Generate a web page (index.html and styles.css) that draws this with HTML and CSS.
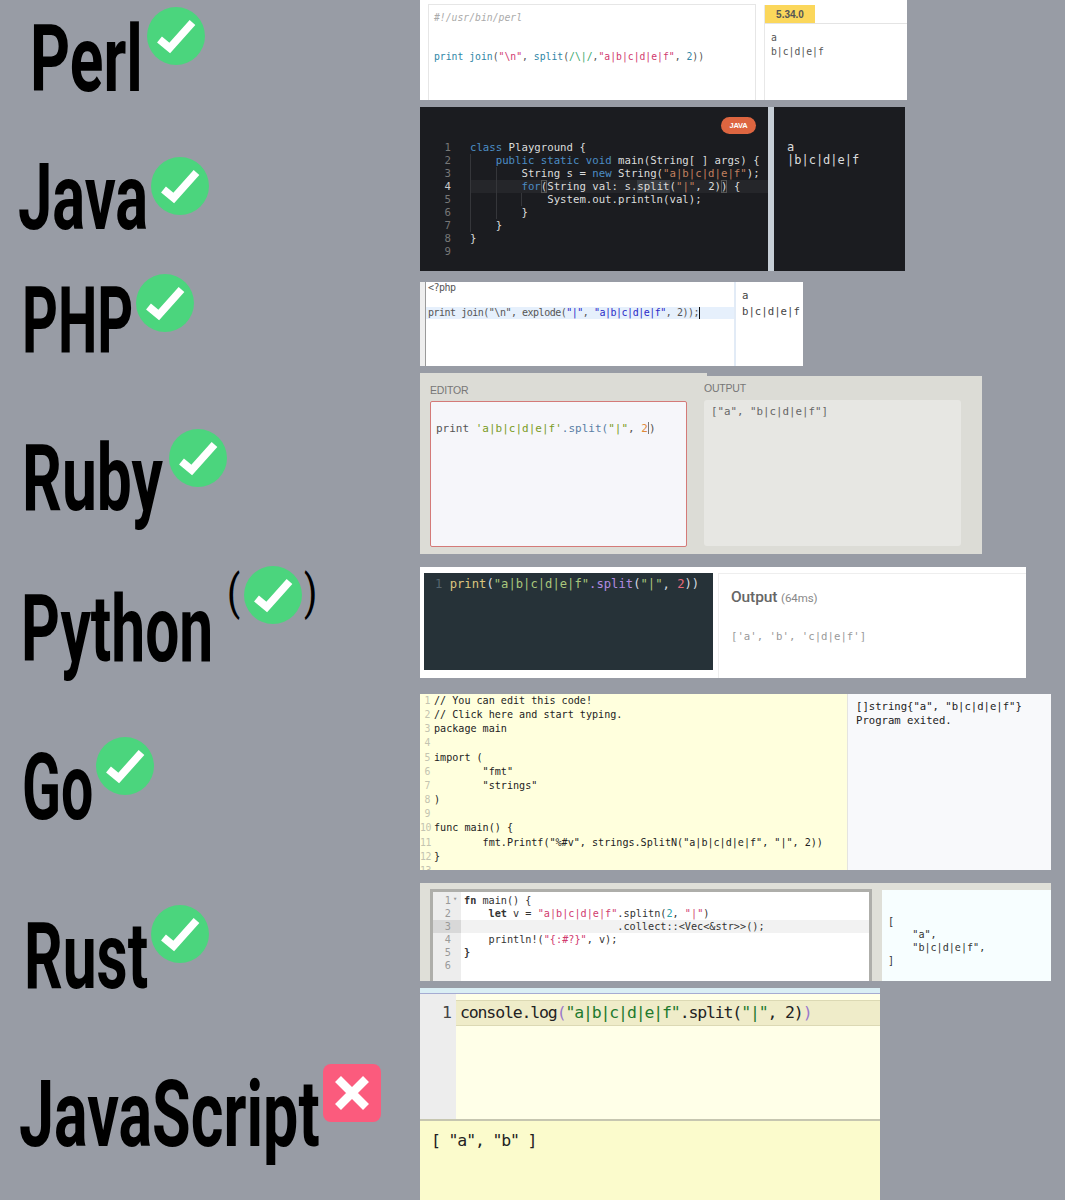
FILE: index.html
```html
<!DOCTYPE html>
<html lang="en">
<head>
<meta charset="utf-8">
<title>Split with limit by language</title>
<link rel="stylesheet" href="styles.css">
</head>
<body>
<main class="canvas">

  <h2 class="lang l-perl">Perl</h2>
  <h2 class="lang l-java">Java</h2>
  <h2 class="lang l-php">PHP</h2>
  <h2 class="lang l-ruby">Ruby</h2>
  <h2 class="lang l-python">Python</h2>
  <h2 class="lang l-go">Go</h2>
  <h2 class="lang l-rust">Rust</h2>
  <h2 class="lang l-js">JavaScript</h2>

  <svg class="badge b-perl" viewBox="0 0 58 58"><circle cx="29" cy="29" r="29" fill="#4bd57d"/><path d="M12.5 32.5 22.7 41 45.5 15.5" fill="none" stroke="#fff" stroke-width="7.6"/></svg>
  <svg class="badge b-java" viewBox="0 0 58 58"><circle cx="29" cy="29" r="29" fill="#4bd57d"/><path d="M12.5 32.5 22.7 41 45.5 15.5" fill="none" stroke="#fff" stroke-width="7.6"/></svg>
  <svg class="badge b-php" viewBox="0 0 58 58"><circle cx="29" cy="29" r="29" fill="#4bd57d"/><path d="M12.5 32.5 22.7 41 45.5 15.5" fill="none" stroke="#fff" stroke-width="7.6"/></svg>
  <svg class="badge b-ruby" viewBox="0 0 58 58"><circle cx="29" cy="29" r="29" fill="#4bd57d"/><path d="M12.5 32.5 22.7 41 45.5 15.5" fill="none" stroke="#fff" stroke-width="7.6"/></svg>
  <svg class="badge b-python" viewBox="0 0 58 58"><circle cx="29" cy="29" r="29" fill="#4bd57d"/><path d="M12.5 32.5 22.7 41 45.5 15.5" fill="none" stroke="#fff" stroke-width="7.6"/></svg>
  <svg class="badge b-go" viewBox="0 0 58 58"><circle cx="29" cy="29" r="29" fill="#4bd57d"/><path d="M12.5 32.5 22.7 41 45.5 15.5" fill="none" stroke="#fff" stroke-width="7.6"/></svg>
  <svg class="badge b-rust" viewBox="0 0 58 58"><circle cx="29" cy="29" r="29" fill="#4bd57d"/><path d="M12.5 32.5 22.7 41 45.5 15.5" fill="none" stroke="#fff" stroke-width="7.6"/></svg>
  <svg class="badge b-js" viewBox="0 0 58 58"><rect width="58" height="58" rx="8" fill="#fb5b7d"/><path d="M15 15 43 43M43 15 15 43" fill="none" stroke="#fff" stroke-width="8.4"/></svg>
  <span class="paren p-open">(</span>
  <span class="paren p-close">)</span>

  <section class="panel perl">
    <div class="perl-editor">
      <pre class="code"><span class="c-comment">#!/usr/bin/perl</span>


<span class="c-teal">print join</span>(<span class="c-pink">"\n"</span>, <span class="c-teal">split</span>(<span class="c-green">/\|/</span>,<span class="c-pink">"a|b|c|d|e|f"</span>, <span class="c-teal">2</span>))</pre>
    </div>
    <div class="perl-output">
      <div class="perl-tabs"><span class="perl-tab">5.34.0</span></div>
      <pre class="code perl-result">a
b|c|d|e|f</pre>
    </div>
  </section>

  <section class="panel java">
    <div class="java-editor">
      <span class="java-pill">JAVA</span>
      <div class="java-body">
        <pre class="code java-gutter">1
2
3
<b>4</b>
5
6
7
8
9</pre>
        <pre class="code java-code"><span class="j-kw">class</span> Playground {
    <span class="j-kw">public static void</span> main(String[ ] args) {
        String s = <span class="j-kw">new</span> String(<span class="j-str">"a|b|c|d|e|f"</span>);
        <span class="j-kw">for</span><span class="j-box">(</span>String val: s.<span class="j-hl">split</span>(<span class="j-str">"|"</span>, 2)<span class="j-box">)</span> {
            System.out.println(val);
        }
    }
}</pre>
      </div>
      <span class="java-active"></span>
      <span class="guide g1"></span>
      <span class="guide g2"></span>
      <span class="guide g3"></span>
    </div>
    <pre class="code java-output">a
|b|c|d|e|f</pre>
  </section>

  <section class="panel php">
    <div class="php-gutter"></div>
    <pre class="code php-code">&lt;?php

<span class="php-line">print join("\n", explode(<span class="p-str">"|"</span>, <span class="p-str">"a|b|c|d|e|f"</span>, 2));<span class="php-caret"></span></span></pre>
    <pre class="code php-output">a
b|c|d|e|f</pre>
  </section>

  <section class="panel ruby">
    <div class="ruby-col ruby-left">
      <h3 class="ruby-title">EDITOR</h3>
      <pre class="code ruby-editor">print <span class="r-str">'a|b|c|d|e|f'</span><span class="r-meth">.split(</span><span class="r-str">"|"</span>, <span class="r-num">2</span><span class="r-caret"></span>)</pre>
    </div>
    <div class="ruby-col ruby-right">
      <h3 class="ruby-title">OUTPUT</h3>
      <pre class="code ruby-output">["a", "b|c|d|e|f"]</pre>
    </div>
  </section>

  <section class="panel python">
    <pre class="code python-editor"><span class="py-num">1</span> <span class="py-fn">print</span>(<span class="py-str">"a|b|c|d|e|f"</span><span class="py-meth">.split</span>(<span class="py-str">"|"</span>, <span class="py-two">2</span>))</pre>
    <div class="python-output">
      <p class="python-title">Output <small>(64ms)</small></p>
      <pre class="code python-result">['a', 'b', 'c|d|e|f']</pre>
    </div>
  </section>

  <section class="panel go">
    <div class="go-editor">
      <pre class="code go-gutter">1
2
3
4
5
6
7
8
9
10
11
12
13</pre>
      <pre class="code go-code">// You can edit this code!
// Click here and start typing.
package main

import (
        "fmt"
        "strings"
)

func main() {
        fmt.Printf("%#v", strings.SplitN("a|b|c|d|e|f", "|", 2))
}</pre>
    </div>
    <pre class="code go-output">[]string{"a", "b|c|d|e|f"}
Program exited.</pre>
  </section>

  <section class="panel rust">
    <div class="rust-editor">
      <pre class="code rust-gutter">1<span class="rust-fold">▾</span>
2
<span class="rust-active-num">3</span>4
5
6</pre>
      <pre class="code rust-code"><b>fn</b> main() {
    <b>let</b> v = <span class="rs-str">"a|b|c|d|e|f"</span>.splitn(<span class="rs-num">2</span>, <span class="rs-str">"|"</span>)
<span class="rust-active">                         .collect::&lt;Vec&lt;&amp;str&gt;&gt;();</span>    println!(<span class="rs-str">"{:#?}"</span>, v);
<b>}</b></pre>
    </div>
    <pre class="code rust-output">[
    "a",
    "b|c|d|e|f",
]</pre>
  </section>

  <section class="panel js">
    <div class="js-editor">
      <div class="js-gutter">1</div>
      <div class="js-main">
        <pre class="code js-line">console.log<span class="js-paren">(</span><span class="js-str">"a|b|c|d|e|f"</span>.split(<span class="js-str">"|"</span>, 2)<span class="js-paren">)</span></pre>
      </div>
    </div>
    <pre class="code js-output">[ "a", "b" ]</pre>
  </section>

</main>
</body>
</html>
```
FILE: styles.css
```css
* { box-sizing: border-box; }
html, body { margin: 0; padding: 0; }
body { background: #989ca5; }
.canvas { position: relative; width: 1065px; height: 1200px; overflow: hidden; background: #989ca5; }

.code { margin: 0; font-family: "DejaVu Sans Mono", monospace; white-space: pre; }
.panel { position: absolute; display: flex; }

/* labels */
.lang {
  position: absolute; margin: 0; font-family: Roboto, sans-serif; font-weight: 700;
  font-size: 93px; line-height: 100px; color: #000; transform-origin: 0 0; white-space: nowrap;
}
.l-perl { left: 30px; top: 10px; transform: scaleX(.67); }
.l-java { left: 18px; top: 148px; transform: scaleX(.66); }
.l-php { left: 22px; top: 272px; transform: scaleX(.6); }
.l-ruby { left: 22px; top: 429px; transform: scaleX(.67); }
.l-python { left: 21px; top: 580px; transform: scaleX(.65); }
.l-go { left: 22px; top: 738px; transform: scaleX(.615); }
.l-rust { left: 24px; top: 907px; transform: scaleX(.65); }
.l-js { left: 19px; top: 1065px; transform: scaleX(.675); }

.badge { position: absolute; width: 58px; height: 58px; }
.b-perl { left: 147px; top: 7px; }
.b-java { left: 151px; top: 157px; }
.b-php { left: 136px; top: 274px; }
.b-ruby { left: 169px; top: 429px; }
.b-python { left: 244px; top: 566px; }
.b-go { left: 96px; top: 737px; }
.b-rust { left: 151px; top: 905px; }
.b-js { left: 323px; top: 1064px; }

.paren { position: absolute; font-family: Roboto, sans-serif; font-size: 48px; line-height: 54px; color: #000; transform-origin: 0 0; transform: scaleX(.8); }
.p-open { left: 227px; top: 566px; }
.p-close { left: 304px; top: 566px; }

/* perl */
.perl { left: 420px; top: 0; width: 487px; height: 100px; background: #fff; }
.perl-editor { width: 328px; flex: none; margin: 4px 0 0 8px; border: 1px solid #e6e6e6; border-bottom: 0; padding: 6px 0 0 5px; }
.perl-editor .code { font-size: 9.75px; line-height: 13px; color: #555; }
.c-comment { color: #aaa; font-style: italic; }
.c-teal { color: #2f86a6; }
.c-pink { color: #d13a6e; }
.c-green { color: #3aa76d; }
.perl-output { margin-left: 8px; flex: 1; border-left: 1px solid #e8e8e8; display: flex; flex-direction: column; margin-top: 5px; }
.perl-tabs { height: 19px; border-bottom: 1px solid #e4e4e4; }
.perl-tab { display: block; width: 50px; height: 18px; background: #fbd75b; color: #555; font: 700 10px/19px "Liberation Sans", sans-serif; text-align: center; }
.perl-result { padding: 7px 0 0 6px; font-size: 9.75px; line-height: 14px; color: #555; }

/* java */
.java { left: 420px; top: 107px; width: 485px; height: 164px; background: #c6ced6; gap: 6px; }
.java-editor { position: relative; width: 348px; background: #1b1c20; padding: 34px 0 0 0; overflow: hidden; }
.java-pill { position: absolute; left: 301px; top: 10px; width: 35px; height: 17px; border-radius: 9px; background: #dd6540; color: #fff; font: 700 7.5px/17px "Liberation Sans", sans-serif; text-align: center; letter-spacing: -.2px; }
.java-body { position: relative; z-index: 1; display: flex; }
.java-gutter { width: 50px; padding-right: 19px; text-align: right; font-size: 10.7px; line-height: 13px; color: #777; }
.java-gutter b { color: #ccc; font-weight: 400; }
.java-code { font-size: 10.7px; line-height: 13px; color: #dcdcdc; }
.j-kw { color: #4c8cc4; }
.j-str { color: #c2805f; }
.j-hl { background: #3a3d42; }
.j-box { outline: 1px solid #555; outline-offset: -1px; }
.java-active { position: absolute; left: 50px; right: 0; top: 73px; height: 13px; background: #25262a; }
.guide { position: absolute; width: 1px; background: #35363a; z-index: 2; }
.g1 { left: 50px; top: 47px; height: 78px; }
.g2 { left: 76px; top: 60px; height: 52px; }
.g3 { left: 101px; top: 86px; height: 13px; }
.java-output { flex: 1; background: #1b1c20; padding: 34px 0 0 13px; font-size: 12px; line-height: 12.5px; color: #ddd; }

/* php */
.php { left: 420px; top: 282px; width: 383px; height: 84px; background: #fff; }
.php-gutter { width: 6px; background: #eee; border-right: 1px solid #9a9a9a; }
.php-code { width: 308px; font-size: 10px; line-height: 12.3px; letter-spacing: -.49px; color: #555; padding-left: 2px; }
.php-line { display: block; margin-left: -2px; padding-left: 2px; background: #e6f0fc; height: 12.5px; }
.p-str { color: #2a2ac8; }
.php-caret { display: inline-block; width: 1px; height: 12px; background: #111; vertical-align: -3px; }
.php-output { flex: 1; border-left: 2px solid #e2ebf6; padding: 6px 0 0 6px; font-size: 10.7px; line-height: 16px; color: #444; }

/* ruby */
.ruby { left: 420px; top: 376px; width: 562px; height: 178px; background: #dcdcd6; padding-left: 10px; gap: 17.5px; }
.ruby::before { content: ""; position: absolute; left: 0; top: -3px; width: 287px; height: 3px; background: #dcdcd6; }
.ruby-col { display: flex; flex-direction: column; width: 256.5px; }
.ruby-title { margin: 0; font: 400 10.5px/14px "Liberation Sans", sans-serif; color: #777; letter-spacing: -.2px; }
.ruby-left .ruby-title { padding-top: 7px; height: 25px; }
.ruby-right .ruby-title { padding-top: 5px; height: 24px; }
.ruby-editor { width: 257px; height: 146px; background: #f6f6fa; border: 1px solid #d47a78; border-radius: 2px; padding: 20px 0 0 5px; font-size: 11px; line-height: 14px; color: #555; }
.r-str { color: #7b9b1e; }
.r-meth { color: #5a7ea5; }
.r-num { color: #e0893a; }
.r-caret { display: inline-block; width: 1px; height: 12px; background: #777; vertical-align: -2px; }
.ruby-output { height: 146px; background: #e7e7e3; border-radius: 3px; padding: 5px 0 0 7px; font-size: 10.8px; line-height: 14px; color: #666; }

/* python */
.python { left: 420px; top: 567px; width: 606px; height: 111px; background: #fff; padding: 6px 0 0 4px; gap: 5px; }
.python-editor { width: 289px; height: 97px; background: #263238; padding: 3px 0 0 11px; font-size: 12.2px; line-height: 16px; color: #d7dce0; }
.py-num { color: #55656f; }
.py-fn { color: #dcc57e; }
.py-str { color: #a9c77c; }
.py-meth { color: #b18be0; }
.py-two { color: #e8697a; }
.python-output { flex: 1; border-left: 1px solid #eee; border-top: 1px solid #eee; padding: 13px 0 0 12px; margin-top: 0; }
.python-title { margin: 0; font: 500 15.5px/20px Roboto, sans-serif; color: #666; letter-spacing: -.1px; }
.python-title small { font-size: 11.5px; font-weight: 400; color: #888; }
.python-result { margin-top: 22px; font-size: 10.7px; line-height: 14px; color: #999; }

/* go */
.go { left: 420px; top: 694px; width: 631px; height: 176px; background: #f8f9fb; }
.go-editor { width: 428px; height: 176px; display: flex; background: #ffffdd; border-right: 1px solid #e4e4e0; overflow: hidden; }
.go-gutter { width: 11px; font-size: 9.8px; line-height: 14.15px; letter-spacing: -.4px; color: #c4c4b0; padding-top: 0; text-align: right; flex: none; padding-right: 1px; }
.go-code { padding-left: 3px; font-size: 10.1px; line-height: 14.15px; color: #222; }
.go-output { padding: 5px 0 0 8px; font-size: 10.6px; line-height: 14.2px; color: #222; }

/* rust */
.rust { left: 420px; top: 883px; width: 631px; height: 98px; background: #dfdfd8; }
.rust-editor { display: flex; width: 442px; height: 92px; margin: 6px 0 0 10px; border: 3px solid #aeaeaa; border-bottom: 0; background: #fff; }
.rust-gutter { position: relative; width: 28px; background: #ededed; padding: 2px 10px 0 0; font-size: 10.2px; line-height: 13px; text-align: right; color: #999; flex: none; overflow: hidden; }
.rust-fold { position: absolute; left: 20px; top: 1px; font-size: 7px; }
.rust-active-num { display: block; margin: 0 -10px 0 0; padding-right: 10px; background: #d8d8d8; }
.rust-code { flex: 1; padding: 2px 0 0 3px; font-size: 10.2px; line-height: 13px; color: #333; }
.rust-active { display: block; margin-left: -3px; padding-left: 3px; background: #f2f2f2; height: 13px; }
.rs-str { color: #d13a6e; }
.rs-num { color: #2d9fa8; }
.rust-output { margin: 7px 0 0 10px; flex: 1; height: 91px; background: #f7feff; padding: 25px 0 0 6px; font-size: 10.1px; line-height: 13px; color: #333; }

/* js */
.js { left: 420px; top: 988px; width: 460px; height: 212px; flex-direction: column; background: #ffffe8; }
.js::before { content: ""; display: block; height: 5px; flex: none; background: #daeef4; border-bottom: 1px solid #a5abd2; }
.js-editor { display: flex; height: 125px; flex: none; }
.js-gutter { width: 36px; flex: none; background: #ededed; font: 400 16.5px/25px "DejaVu Sans Mono", monospace; text-align: right; padding: 6px 4px 0 0; color: #444; }
.js-main { flex: 1; padding-top: 6px; }
.js-line { height: 26px; background: #efecc9; border-top: 1px solid #dcd9b4; border-bottom: 1px solid #dcd9b4; padding-left: 4px; font-size: 16.5px; line-height: 24px; letter-spacing: -1.15px; color: #222; }
.js-paren { color: #9a78cc; }
.js-str { color: #1f7a2e; }
.js-output { flex: 1; background: #fbfbcc; border-top: 2px solid #c6c6b0; padding: 8px 0 0 11px; font-size: 16.5px; line-height: 24px; letter-spacing: -1.15px; color: #222; }
```
